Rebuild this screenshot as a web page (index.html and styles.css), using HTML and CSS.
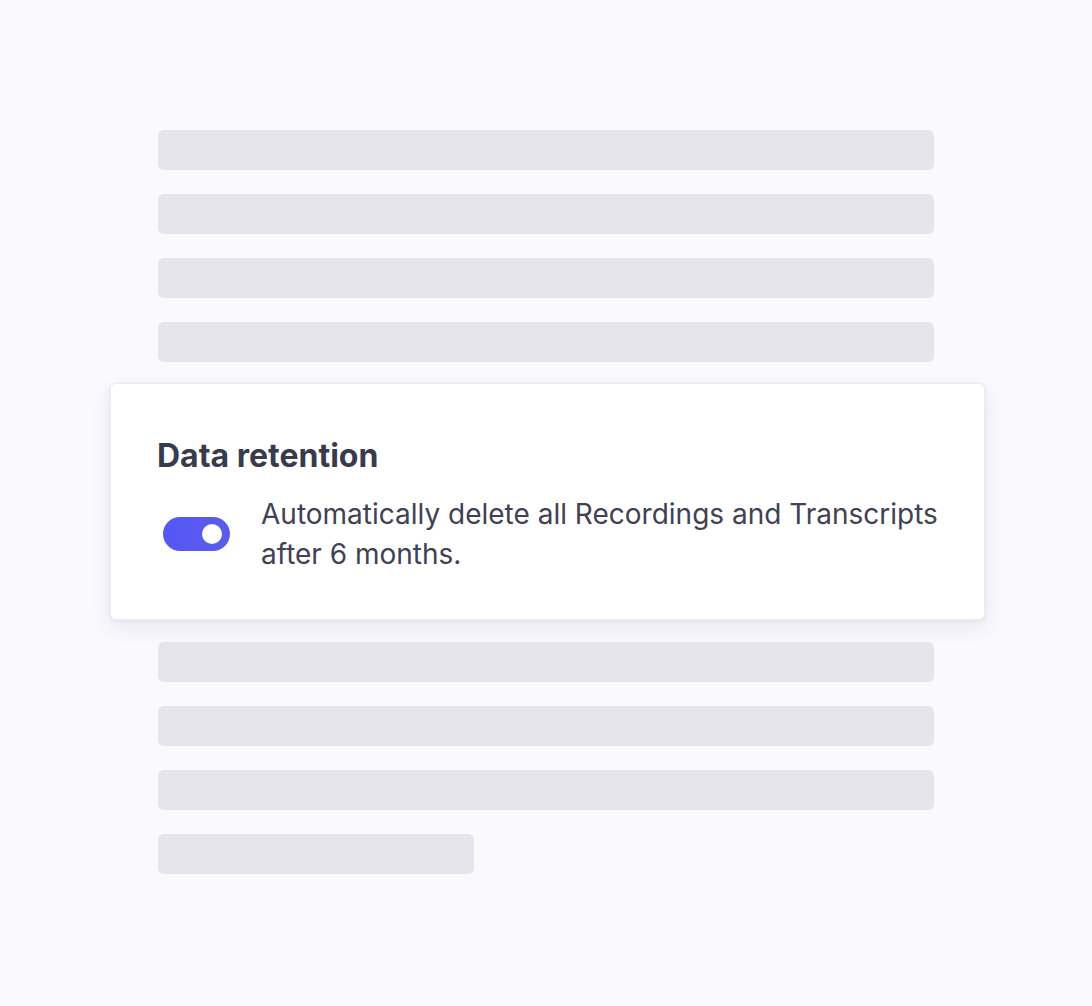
FILE: index.html
```html
<!DOCTYPE html>
<html lang="en">
<head>
<meta charset="utf-8">
<title>Data retention</title>
<link rel="stylesheet" href="styles.css">
</head>
<body>
<main class="page">
  <div class="stack">
    <div class="bar"></div>
    <div class="bar"></div>
    <div class="bar"></div>
    <div class="bar"></div>
    <section class="card">
      <h2 class="card-title">Data retention</h2>
      <div class="setting">
        <span class="toggle" role="switch" aria-checked="true"><span class="knob"></span></span>
        <p class="setting-text">Automatically delete all Recordings and Transcripts after 6 months.</p>
      </div>
    </section>
    <div class="bar"></div>
    <div class="bar"></div>
    <div class="bar"></div>
    <div class="bar bar-short"></div>
  </div>
</main>
</body>
</html>
```

FILE: styles.css
```css
* { box-sizing: border-box; }
html, body {
  margin: 0;
  padding: 0;
  background: #f9f9fe;
  font-family: Inter, "Noto Sans", sans-serif;
}
.page {
  width: 1092px;
  height: 1006px;
  padding-top: 130px;
  display: flex;
  justify-content: center;
}
.stack {
  width: 776px;
  display: flex;
  flex-direction: column;
  gap: 24px;
}
.bar {
  height: 40px;
  border-radius: 6px;
  background: #e6e5ec;
}
.bar-short {
  width: 316px;
}
.card {
  margin: -3px -51px -2px -48px;
  height: 237px;
  background: #ffffff;
  border: 1px solid #ebebf1;
  border-radius: 6px;
  box-shadow: 0 8px 22px rgba(40, 40, 90, 0.09), 0 1px 4px rgba(40, 40, 90, 0.05);
  padding: 54px 46px 0 46px;
}
.card-title {
  margin: 0;
  font-size: 32px;
  line-height: 36px;
  font-weight: 700;
  color: #393b4d;
}
.setting {
  display: flex;
  align-items: flex-start;
  margin-top: 20px;
}
.toggle {
  flex: none;
  width: 67px;
  height: 34px;
  border-radius: 17px;
  background: linear-gradient(90deg, #5457f6, #5b5cec);
  margin: 23px 31px 0 6px;
  display: flex;
  align-items: center;
  justify-content: flex-end;
  padding-right: 8px;
}
.knob {
  width: 20px;
  height: 20px;
  border-radius: 50%;
  background: #ffffff;
}
.setting-text {
  margin: 0;
  font-size: 28px;
  line-height: 40px;
  color: #404253;
  font-weight: 400;
}
```
